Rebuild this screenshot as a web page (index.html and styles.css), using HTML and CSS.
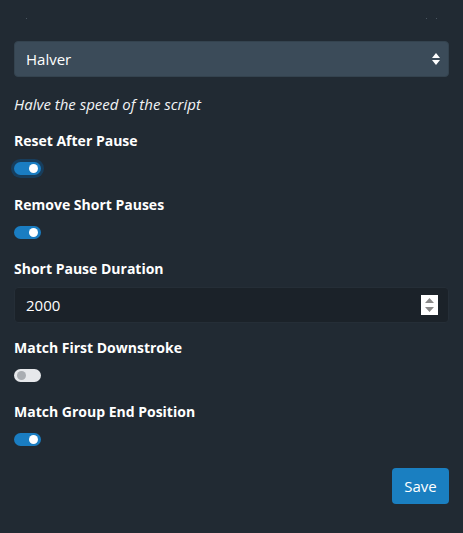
FILE: index.html
```html
<!DOCTYPE html>
<html>
<head>
<meta charset="utf-8">
<link rel="stylesheet" href="styles.css">
</head>
<body>
<div class="panel">
  <div class="topbar"><span class="dot"></span><span class="dots"><span class="dot"></span><span class="dot"></span></span></div>
  <div class="select">
    <span>Halver</span>
    <svg class="caret" width="8" height="12" viewBox="0 0 8 12"><path d="M4 0 L8 5 L0 5 Z M0 7 L8 7 L4 12 Z" fill="#fff"/></svg>
  </div>
  <p class="desc">Halve the speed of the script</p>

  <div class="field">
    <div class="label">Reset After Pause</div>
    <div class="switch on focus"><span class="knob"></span></div>
  </div>
  <div class="field">
    <div class="label">Remove Short Pauses</div>
    <div class="switch on"><span class="knob"></span></div>
  </div>
  <div class="field">
    <div class="label">Short Pause Duration</div>
    <div class="input">
      <span>2000</span>
      <span class="spin"><svg width="17" height="20" viewBox="0 0 17 20"><rect width="17" height="20" fill="#fff"/><path d="M8.5 3 L13 8 L4 8 Z M4 12 L13 12 L8.5 17 Z" fill="#8a8a8a"/></svg></span>
    </div>
  </div>
  <div class="field">
    <div class="label">Match First Downstroke</div>
    <div class="switch off"><span class="knob"></span></div>
  </div>
  <div class="field">
    <div class="label">Match Group End Position</div>
    <div class="switch on"><span class="knob"></span></div>
  </div>
  <div class="actions"><button class="save">Save</button></div>
</div>
</body>
</html>
```
FILE: styles.css
```css
html, body {
  margin: 0;
  padding: 0;
  background: #212a33;
}
body {
  font-family: "Open Sans", "Noto Sans", sans-serif;
  color: #ffffff;
  width: 463px;
  height: 533px;
}
.panel {
  padding: 0 14px;
  display: flex;
  flex-direction: column;
}
.topbar {
  height: 41px;
  display: flex;
  justify-content: space-between;
  align-items: flex-start;
  padding: 18px 12px 0 12px;
  box-sizing: border-box;
}
.dots { display: flex; gap: 9px; }
.dot {
  width: 1px;
  height: 1px;
  background: #4a5560;
  display: block;
}
.select {
  height: 36px;
  background: #3b4b59;
  border: 1px solid #34434f;
  border-radius: 4px;
  display: flex;
  align-items: center;
  justify-content: space-between;
  padding: 0 8px 0 11px;
  font-size: 15px;
  box-sizing: border-box;
}
.caret { display: block; }
.desc {
  margin: 17px 0 0 0;
  font-style: italic;
  font-size: 15px;
  line-height: 20px;
  color: #f2f4f6;
}
.field {
  display: flex;
  flex-direction: column;
  align-items: flex-start;
  margin-top: 17px;
}
.field + .field {
  margin-top: 15px;
}
.label {
  font-weight: 700;
  font-size: 14px;
  line-height: 20px;
}
.switch {
  margin-top: 11px;
  margin-bottom: 5px;
  width: 27px;
  height: 13px;
  border-radius: 7px;
  position: relative;
}
.switch.on { background: #1a7dc2; }
.switch.off { background: #e6e8eb; }
.switch.focus { box-shadow: 0 0 0 3px #173d5c; }
.knob {
  position: absolute;
  top: 2px;
  width: 9px;
  height: 9px;
  border-radius: 50%;
}
.switch.on .knob { right: 3px; background: #fff; }
.switch.off .knob { left: 3px; background: #a9adb2; }
.input {
  align-self: stretch;
  margin-top: 8px;
  height: 36px;
  background: #1b2229;
  border: 1px solid #252e37;
  border-radius: 4px;
  box-sizing: border-box;
  display: flex;
  align-items: center;
  justify-content: space-between;
  padding: 0 10px 0 11px;
  font-size: 15px;
}
.spin { display: flex; }
.actions {
  display: flex;
  justify-content: flex-end;
  margin-top: 17px;
}
.save {
  background: #1a7fc1;
  color: #fff;
  border: none;
  border-radius: 4px;
  font-family: "Open Sans", "Noto Sans", sans-serif;
  font-size: 15px;
  width: 57px;
  height: 36px;
  padding: 0;
}
```
